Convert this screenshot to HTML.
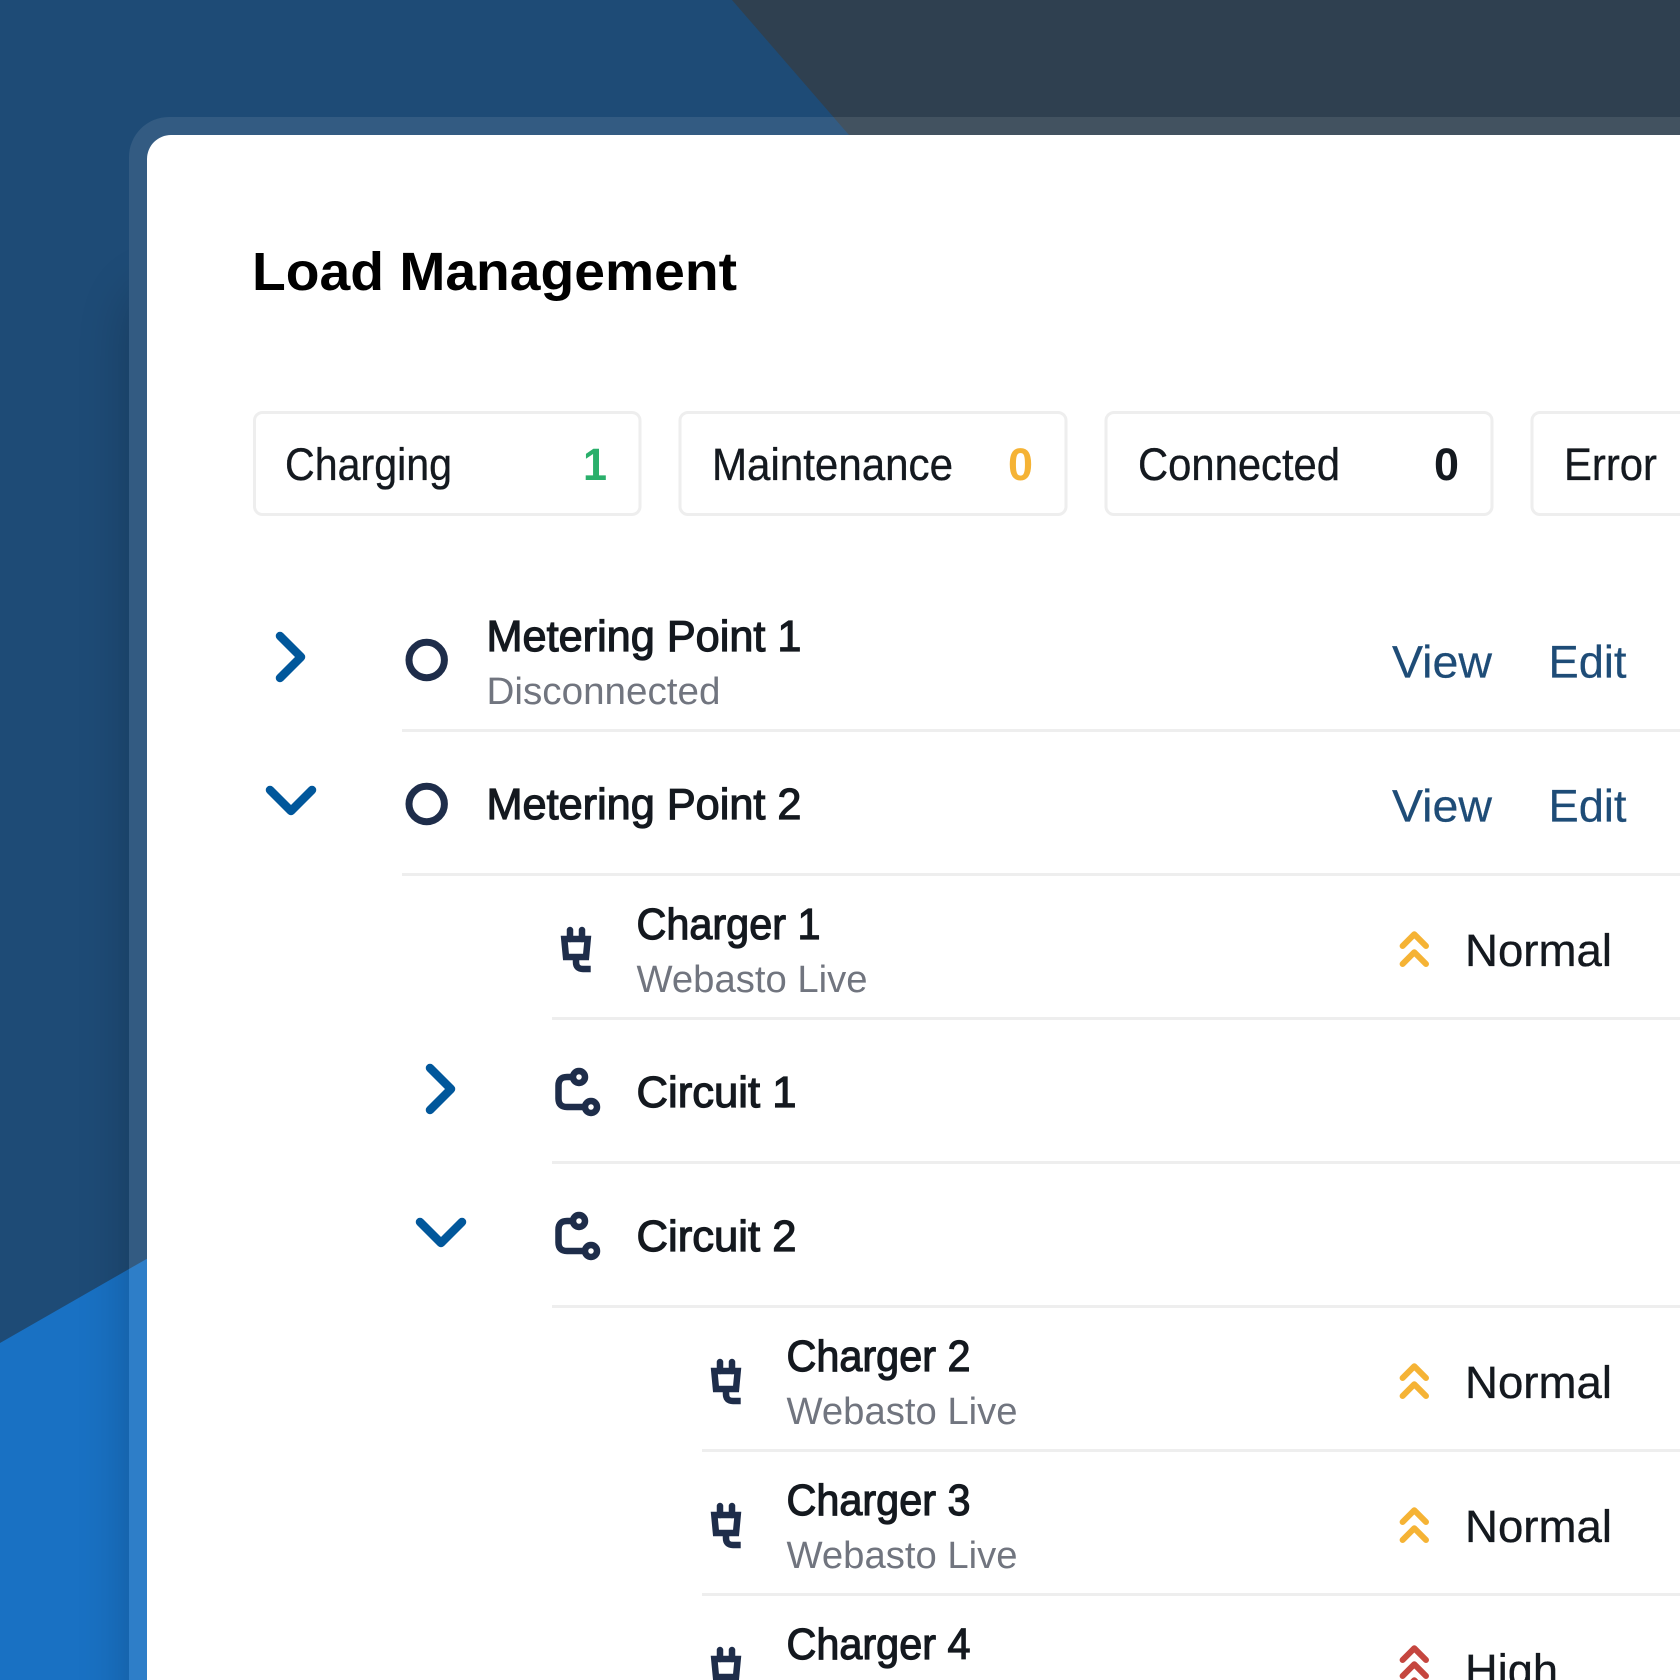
<!DOCTYPE html>
<html lang="en">
<head>
<meta charset="utf-8">
<title>Load Management</title>
<style>
html,body{margin:0;padding:0;background:#1e4b76;width:1680px;height:1680px;overflow:hidden;}
#page{position:relative;width:1680px;height:1680px;overflow:hidden;contain:paint;}
svg{position:absolute;left:0;top:0;display:block;}
text{font-family:"Liberation Sans",sans-serif;}
.t{font-size:45px;fill:#14191f;stroke:#14191f;stroke-width:.35px;}
.n{font-size:45px;font-weight:700;}
.b{font-size:44px;fill:#14191f;stroke:#14191f;stroke-width:1.2px;}
.s{font-size:38px;fill:#71757f;}
.l{font-size:45px;fill:#1e4c77;stroke:#1e4c77;stroke-width:.25px;}
.ln{fill:#eeeeee;}
.ch{fill:none;stroke:#01579b;stroke-width:8.5;stroke-linecap:round;stroke-linejoin:round;}
.ic{fill:none;stroke:#1e2d4a;stroke-width:6.5;}
.pr{fill:none;stroke:#1e2d4a;stroke-width:6.5;stroke-linecap:round;}
.ye{fill:none;stroke:#f5b335;stroke-width:6;stroke-linecap:round;stroke-linejoin:round;}
.re{fill:none;stroke:#c5463f;stroke-width:6;stroke-linecap:round;stroke-linejoin:round;}
#shadow{position:absolute;left:129px;top:117px;width:1551px;height:1563px;border-radius:40px 0 0 0;box-shadow:0 170px 50px rgba(0,0,0,.22);}
</style>
</head>
<body>
<div id="page">
<svg width="1680" height="1680" viewBox="0 0 1680 1680" style="z-index:0">
  <rect width="1680" height="1680" fill="#1e4b76"/>
  <polygon points="732,0 1680,0 1680,1100 849,135" fill="#2f4050"/>
  <polygon points="0,1343 147,1258.7 300,1170 300,1680 0,1680" fill="#1971c3"/>
</svg>
<div id="shadow" style="z-index:1"></div>
<svg width="1680" height="1680" viewBox="0 0 1680 1680" style="z-index:2">
  <defs>
    <g id="plug">
      <path class="ic" d="M-11.7,-9 H11.7 L10,9 H-10 Z"/>
      <path class="pr" d="M-6,-18 V-9 M6,-18 V-9"/>
      <path class="ic" d="M0,11 V14 Q0,21 7,21 H14.7"/>
    </g>
    <g id="circuit">
      <circle class="ic" cx="579" cy="1077" r="6"/>
      <circle class="ic" cx="591" cy="1107" r="6"/>
      <path class="ic" d="M572.5,1077 H567 Q558.5,1077 558.5,1085.5 V1098.5 Q558.5,1107 567,1107 H584.5"/>
    </g>
    <g id="dbl">
      <path d="M-11.7,11.7 L0,0 L11.7,11.7 M-11.7,29.7 L0,18 L11.7,29.7"/>
    </g>
  </defs>

  <rect x="129" y="117" width="1700" height="1800" rx="40" fill="#ffffff" fill-opacity=".095"/>
  <rect x="147" y="135" width="1700" height="1800" rx="24" fill="#ffffff"/>

  <text x="252" y="290" font-size="54" font-weight="700" fill="#000" textLength="485" lengthAdjust="spacingAndGlyphs">Load Management</text>

  <rect x="254.5" y="412.5" width="385.5" height="102" rx="8" fill="#fff" stroke="#eeeeee" stroke-width="3"/>
  <rect x="680" y="412.5" width="386" height="102" rx="8" fill="#fff" stroke="#eeeeee" stroke-width="3"/>
  <rect x="1106" y="412.5" width="386" height="102" rx="8" fill="#fff" stroke="#eeeeee" stroke-width="3"/>
  <rect x="1532" y="412.5" width="385" height="102" rx="8" fill="#fff" stroke="#eeeeee" stroke-width="3"/>

  <text class="t" x="285" y="480" textLength="167" lengthAdjust="spacingAndGlyphs">Charging</text>
  <text class="n" x="583" y="480" fill="#2aaf6b" textLength="24" lengthAdjust="spacingAndGlyphs">1</text>
  <text class="t" x="712" y="480" textLength="241" lengthAdjust="spacingAndGlyphs">Maintenance</text>
  <text class="n" x="1008" y="480" fill="#f5b335" textLength="25" lengthAdjust="spacingAndGlyphs">0</text>
  <text class="t" x="1138" y="480" textLength="202" lengthAdjust="spacingAndGlyphs">Connected</text>
  <text class="n" x="1434" y="480" fill="#14191f" textLength="25" lengthAdjust="spacingAndGlyphs">0</text>
  <text class="t" x="1564" y="480" textLength="93" lengthAdjust="spacingAndGlyphs">Error</text>

  <!-- divider lines -->
  <rect class="ln" x="402" y="729" width="1278" height="3"/>
  <rect class="ln" x="402" y="873" width="1278" height="3"/>
  <rect class="ln" x="552" y="1017" width="1128" height="3"/>
  <rect class="ln" x="552" y="1161" width="1128" height="3"/>
  <rect class="ln" x="552" y="1305" width="1128" height="3"/>
  <rect class="ln" x="702" y="1449" width="978" height="3"/>
  <rect class="ln" x="702" y="1593" width="978" height="3"/>

  <!-- Metering Point 1 -->
  <path class="ch" d="M280,636 L301,657 L280,678"/>
  <circle cx="426.7" cy="660" r="17.7" fill="none" stroke="#1e2d4a" stroke-width="7"/>
  <text class="b" x="486.5" y="651" textLength="315" lengthAdjust="spacingAndGlyphs">Metering Point 1</text>
  <text class="s" x="486.5" y="704" textLength="234" lengthAdjust="spacingAndGlyphs">Disconnected</text>
  <text class="l" x="1392" y="677.5" textLength="100" lengthAdjust="spacingAndGlyphs">View</text>
  <text class="l" x="1548.5" y="677.5" textLength="78" lengthAdjust="spacingAndGlyphs">Edit</text>

  <!-- Metering Point 2 -->
  <path class="ch" d="M270,790 L291,811 L312,790"/>
  <circle cx="426.7" cy="804" r="17.7" fill="none" stroke="#1e2d4a" stroke-width="7"/>
  <text class="b" x="486.5" y="819" textLength="315" lengthAdjust="spacingAndGlyphs">Metering Point 2</text>
  <text class="l" x="1392" y="821.5" textLength="100" lengthAdjust="spacingAndGlyphs">View</text>
  <text class="l" x="1548.5" y="821.5" textLength="78" lengthAdjust="spacingAndGlyphs">Edit</text>

  <!-- Charger 1 -->
  <use href="#plug" transform="translate(576,948)"/>
  <text class="b" x="636.5" y="939" textLength="184" lengthAdjust="spacingAndGlyphs">Charger 1</text>
  <text class="s" x="636.5" y="992" textLength="231" lengthAdjust="spacingAndGlyphs">Webasto Live</text>
  <use href="#dbl" class="ye" transform="translate(1414.3,934.3)"/>
  <text class="t" x="1465" y="966" textLength="147" lengthAdjust="spacingAndGlyphs">Normal</text>

  <!-- Circuit 1 -->
  <path class="ch" d="M430,1068 L451,1089 L430,1110"/>
  <use href="#circuit"/>
  <text class="b" x="636.5" y="1107" textLength="160" lengthAdjust="spacingAndGlyphs">Circuit 1</text>

  <!-- Circuit 2 -->
  <path class="ch" d="M420,1222 L441,1243 L462,1222"/>
  <use href="#circuit" transform="translate(0,144)"/>
  <text class="b" x="636.5" y="1251" textLength="160" lengthAdjust="spacingAndGlyphs">Circuit 2</text>

  <!-- Charger 2 -->
  <use href="#plug" transform="translate(726,1380)"/>
  <text class="b" x="786.5" y="1371" textLength="184" lengthAdjust="spacingAndGlyphs">Charger 2</text>
  <text class="s" x="786.5" y="1424" textLength="231" lengthAdjust="spacingAndGlyphs">Webasto Live</text>
  <use href="#dbl" class="ye" transform="translate(1414.3,1366.3)"/>
  <text class="t" x="1465" y="1398" textLength="147" lengthAdjust="spacingAndGlyphs">Normal</text>

  <!-- Charger 3 -->
  <use href="#plug" transform="translate(726,1524)"/>
  <text class="b" x="786.5" y="1515" textLength="184" lengthAdjust="spacingAndGlyphs">Charger 3</text>
  <text class="s" x="786.5" y="1568" textLength="231" lengthAdjust="spacingAndGlyphs">Webasto Live</text>
  <use href="#dbl" class="ye" transform="translate(1414.3,1510.3)"/>
  <text class="t" x="1465" y="1542" textLength="147" lengthAdjust="spacingAndGlyphs">Normal</text>

  <!-- Charger 4 -->
  <use href="#plug" transform="translate(726,1668)"/>
  <text class="b" x="786.5" y="1659" textLength="184" lengthAdjust="spacingAndGlyphs">Charger 4</text>
  <path class="re" d="M1402.6,1660 L1414.3,1648.3 L1426,1660 M1402.6,1676 L1414.3,1664.3 L1426,1676 M1402.6,1692 L1414.3,1680.3 L1426,1692"/>
  <text class="t" x="1465" y="1686" textLength="93" lengthAdjust="spacingAndGlyphs">High</text>
</svg>
</div>
</body>
</html>
